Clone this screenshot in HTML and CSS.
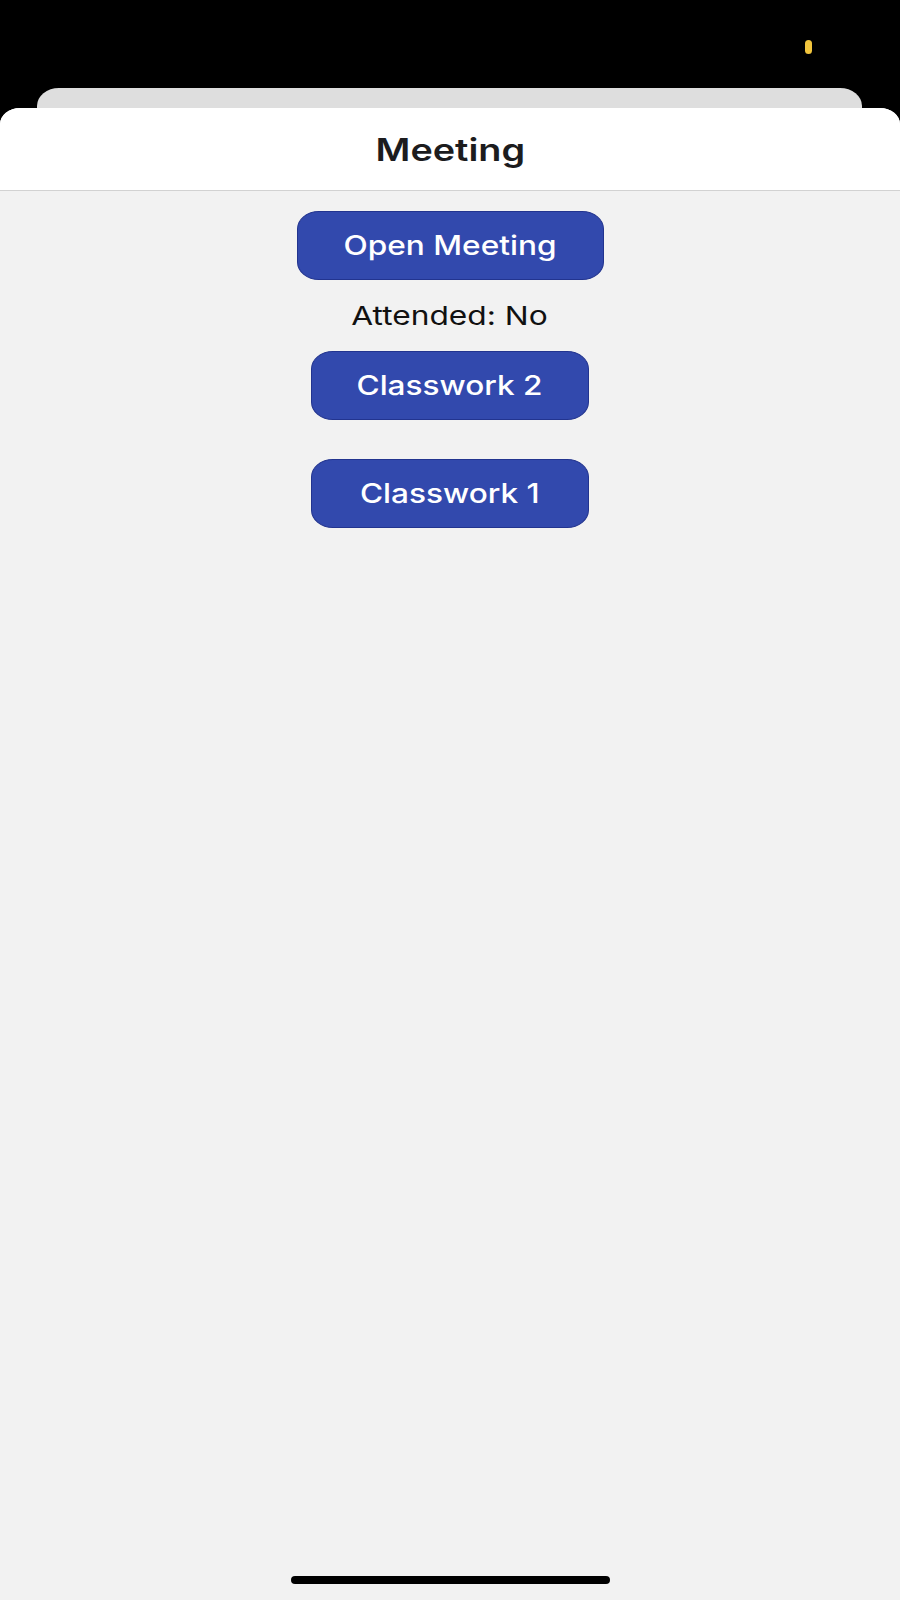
FILE: index.html
```html
<!DOCTYPE html>
<html lang="en">
<head>
<meta charset="utf-8">
<title>Meeting</title>
<link rel="stylesheet" href="styles.css">
</head>
<body>
  <div class="status">
    <span class="dot"></span>
  </div>
  <div class="card-behind"></div>
  <main class="sheet">
    <header class="header">
      <h1 class="title"><span class="wide">Meeting</span></h1>
    </header>
    <section class="content">
      <button class="btn btn-open"><span class="wide-btn">Open Meeting</span></button>
      <p class="attended"><span class="wide">Attended: No</span></p>
      <button class="btn btn-work"><span class="wide-btn">Classwork 2</span></button>
      <button class="btn btn-work btn-gap"><span class="wide-btn">Classwork 1</span></button>
    </section>
    <div class="home-indicator"></div>
  </main>
</body>
</html>
```

FILE: styles.css
```css
html, body {
  margin: 0;
  padding: 0;
}

body {
  width: 900px;
  height: 1600px;
  background: #000;
  display: flex;
  flex-direction: column;
  overflow: hidden;
  font-family: "Inter", "Liberation Sans", sans-serif;
}

.status {
  height: 88px;
  flex: none;
  display: flex;
  align-items: flex-start;
}

.dot {
  margin-left: 805px;
  margin-top: 40px;
  width: 7px;
  height: 14px;
  border-radius: 4px;
  background: #f2c53d;
}

.card-behind {
  flex: none;
  height: 20px;
  margin: 0 38px 0 37px;
  background: #dedede;
  border-radius: 22px 22px 0 0 / 18px 18px 0 0;
}

.sheet {
  flex: 1;
  position: relative;
  background: #f2f2f2;
  border-radius: 20px 20px 0 0 / 16px 16px 0 0;
  overflow: hidden;
  display: flex;
  flex-direction: column;
}

.header {
  height: 82px;
  flex: none;
  background: #fff;
  border-bottom: 1px solid #d2d2d2;
  display: flex;
  align-items: center;
  justify-content: center;
}

.title {
  margin: 0;
  font-size: 31px;
  font-weight: 600;
  color: #1c1c1e;
  line-height: 1;
}

.wide {
  display: inline-block;
  transform: scaleX(1.22);
}

.wide-btn {
  display: inline-block;
  transform: scaleX(1.17);
}

.content {
  display: flex;
  flex-direction: column;
  align-items: center;
  padding-top: 20px;
}

.btn {
  box-sizing: border-box;
  height: 69px;
  border: 1px solid #22348f;
  border-radius: 22px / 18px;
  background: #3249ad;
  color: #fff;
  font-family: "Inter", "Liberation Sans", sans-serif;
  font-size: 27px;
  font-weight: 500;
  padding: 0;
  display: flex;
  align-items: center;
  justify-content: center;
}

.btn-open {
  width: 307px;
}

.btn-work {
  width: 278px;
}

.btn-gap {
  margin-top: 39px;
}

.attended {
  margin: 0;
  height: 71px;
  line-height: 71px;
  font-size: 26px;
  color: #111;
  text-align: center;
}

.home-indicator {
  position: absolute;
  left: 291px;
  bottom: 16px;
  width: 319px;
  height: 8px;
  border-radius: 4px;
  background: #000;
}
```
